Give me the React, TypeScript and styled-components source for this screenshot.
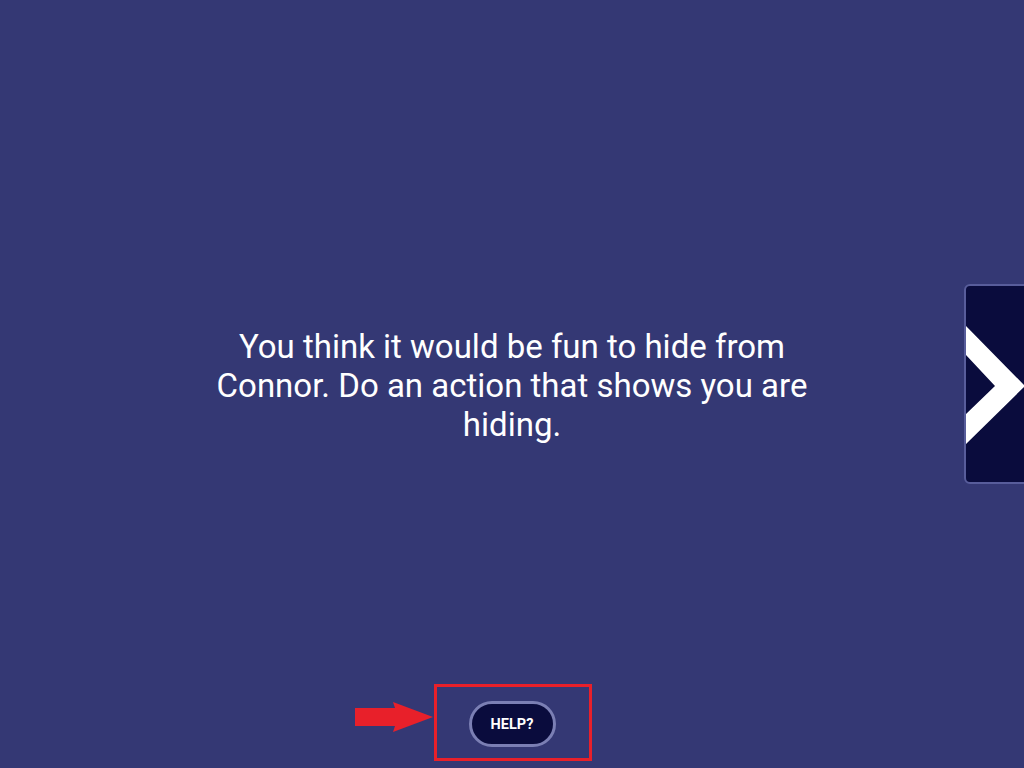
import React from 'react';
import styled, { createGlobalStyle } from 'styled-components';

const GlobalStyle = createGlobalStyle`
  html, body, #root {
    margin: 0;
    padding: 0;
    height: 100%;
  }
  body {
    background: #343874;
    font-family: Roboto, "Noto Sans", sans-serif;
    overflow: hidden;
  }
`;

const Screen = styled.div`
  position: relative;
  height: 100vh;
  display: flex;
  flex-direction: column;
  align-items: center;
  overflow: hidden;
`;

const PromptArea = styled.main`
  flex: 1;
  display: flex;
  align-items: center;
  justify-content: center;
  padding-top: 70px;
`;

const Prompt = styled.p`
  margin: 0;
  width: 610px;
  color: #ffffff;
  font-size: 33px;
  line-height: 39px;
  text-align: center;
`;

const Footer = styled.footer`
  position: relative;
  display: flex;
  justify-content: center;
  padding-bottom: 21px;
`;

const HelpButton = styled.button`
  width: 87px;
  height: 46px;
  border-radius: 23px;
  border: 3px solid #7b7fb4;
  background: #0a0c3d;
  color: #ffffff;
  font-family: Roboto, sans-serif;
  font-weight: 700;
  font-size: 14.5px;
  cursor: pointer;
`;

const Highlight = styled.div`
  position: absolute;
  left: -35px;
  top: -17px;
  width: 152px;
  height: 71px;
  border: 3px solid #e8202a;
  pointer-events: none;
`;

const Pointer = styled.svg`
  position: absolute;
  left: -115px;
  top: 0px;
  pointer-events: none;
`;

const NextButton = styled.button`
  position: absolute;
  right: -8px;
  top: 284px;
  width: 68px;
  height: 200px;
  padding: 0;
  border-radius: 6px;
  border: 2px solid #585d9b;
  background: #0a0c3d;
  overflow: hidden;
  cursor: pointer;
  display: block;
`;

export default function App() {
  return (
    <>
      <GlobalStyle />
      <Screen>
        <PromptArea>
          <Prompt>
            You think it would be fun to hide from Connor. Do an action that shows you are hiding.
          </Prompt>
        </PromptArea>
        <Footer>
          <HelpButton>HELP?</HelpButton>
          <Highlight />
          <Pointer width="80" height="32" viewBox="0 0 80 32">
            <polygon points="1,7 41,7 39,1 79,16 39,31 41,25 1,25" fill="#e8202a" />
          </Pointer>
        </Footer>
        <NextButton aria-label="Next">
          <svg width="68" height="200" viewBox="0 0 68 200">
            <polygon points="-1,39 59,100 -1,159 -1,129 29,100 -1,68" fill="#ffffff" />
          </svg>
        </NextButton>
      </Screen>
    </>
  );
}
